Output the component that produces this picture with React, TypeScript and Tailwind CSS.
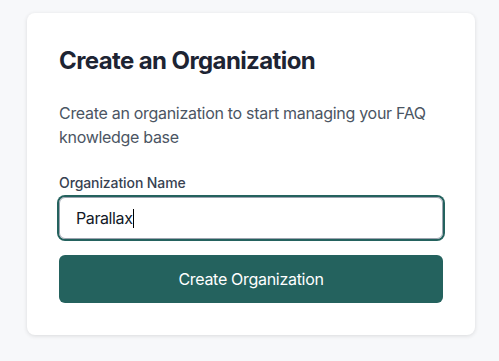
const TEXT = {
  title: "Create an Organization",
  description: "Create an organization to start managing your FAQ knowledge base",
  label: "Organization Name",
  value: "Parallax",
  submit: "Create Organization",
};

export default function App() {
  return (
    <div
      className="min-h-[361px] w-full bg-[#f7f8fa] pt-[13px] pl-[27px]"
      style={{ fontFamily: "Inter, 'Noto Sans', sans-serif" }}
    >
      <div className="w-[448px] rounded-lg bg-white p-8 shadow-[0_1px_4px_rgba(0,0,0,0.12)]">
        <h1 className="text-2xl leading-8 font-bold tracking-[-0.6px] text-[#1d2433]">{TEXT.title}</h1>
        <p className="mt-6 text-base leading-6 tracking-[-0.3px] text-[#4b5563]">{TEXT.description}</p>
        <label className="mt-6 block text-sm leading-5 font-medium tracking-[-0.1px] text-[#374151]">
          {TEXT.label}
        </label>
        <div
          role="textbox"
          className="mt-1 flex h-[42px] items-center rounded-md border border-[#9ca3af] px-4 text-base tracking-[-0.4px] text-[#111827] ring-2 ring-[#24625e]"
        >
          <span>{TEXT.value}</span>
          <span className="ml-px inline-block h-[19px] w-px bg-black" />
        </div>
        <button
          type="button"
          className="mt-4 h-12 w-full rounded-md bg-[#24625e] text-base tracking-[-0.3px] text-white"
        >
          {TEXT.submit}
        </button>
      </div>
    </div>
  );
}
